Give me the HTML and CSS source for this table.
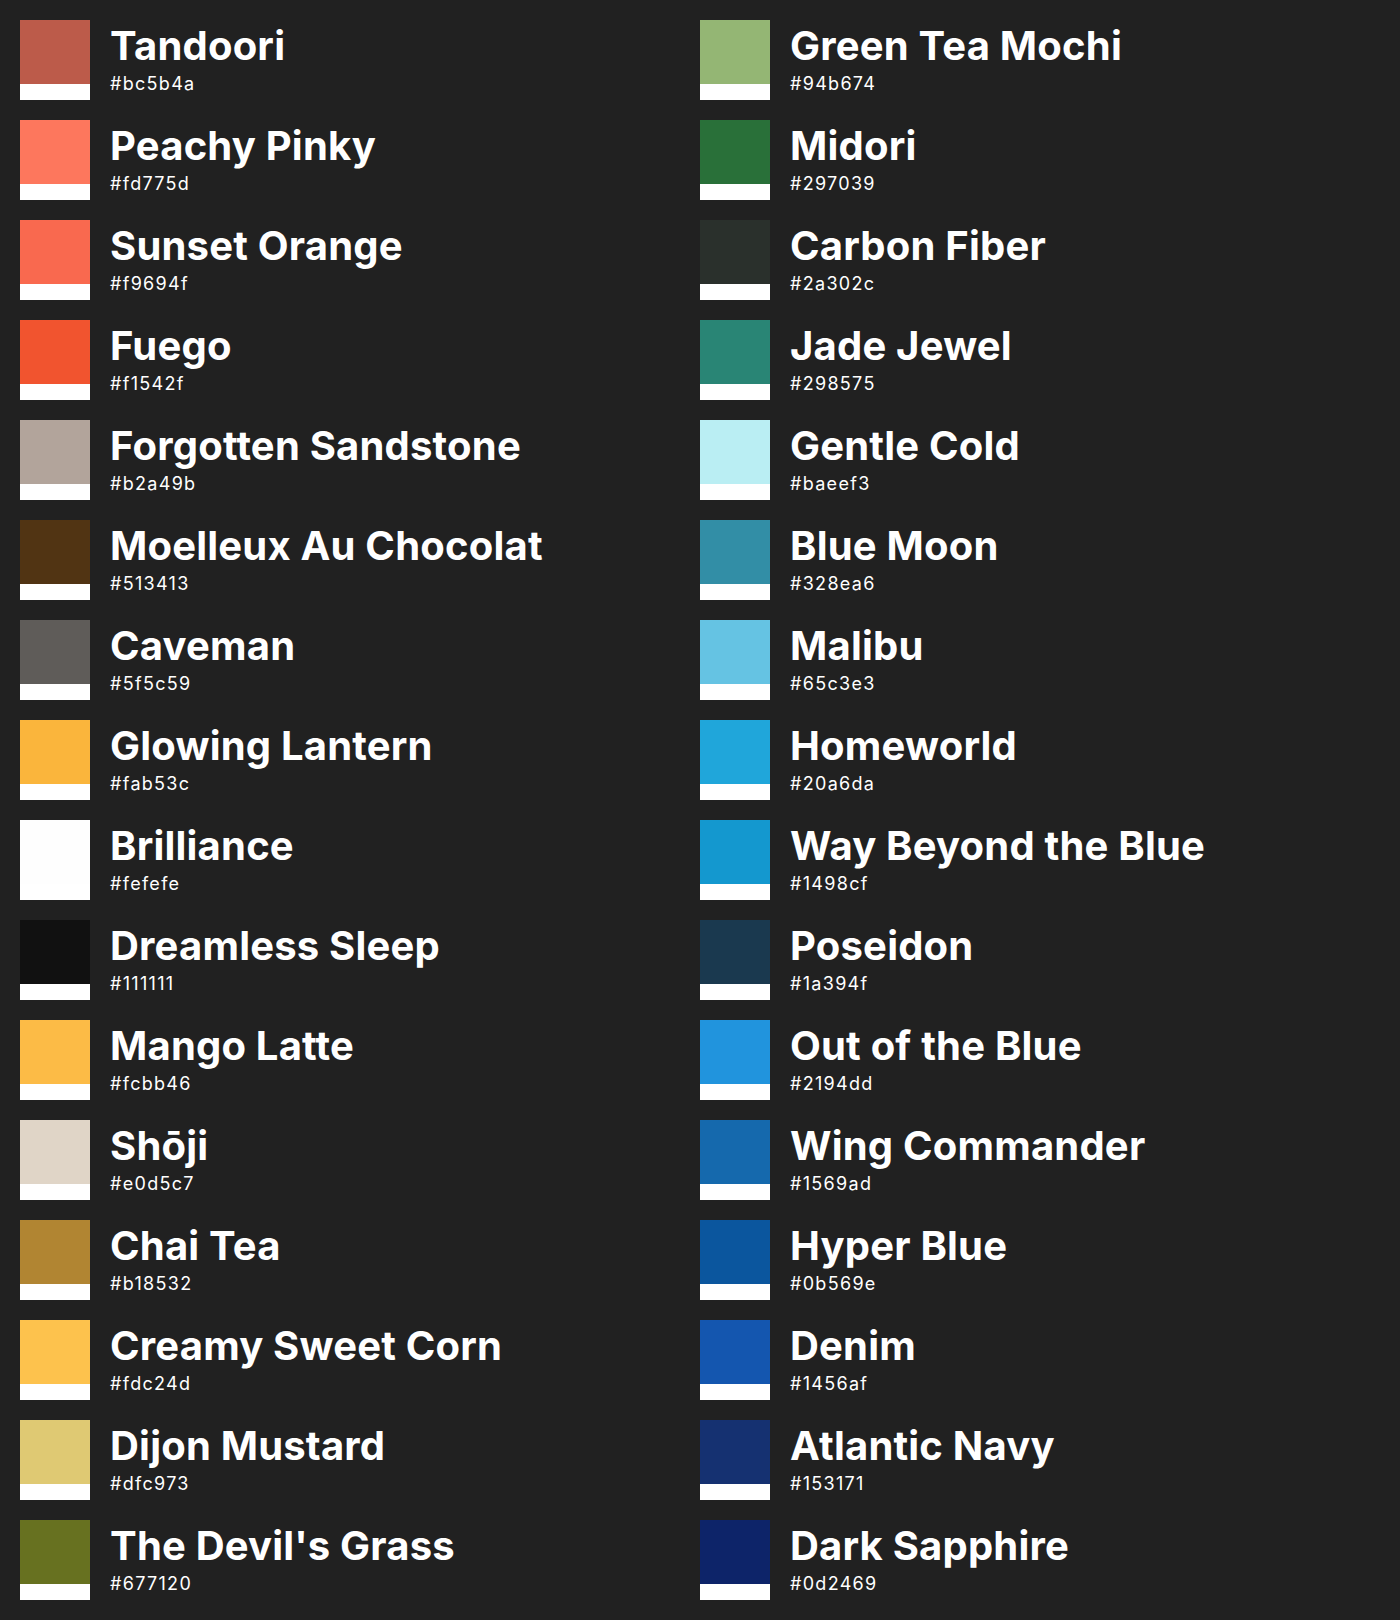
FILE: index.html
```html
<!DOCTYPE html>
<html>
<head>
<meta charset="utf-8">
<link rel="stylesheet" href="styles.css">
</head>
<body>
<main class="palette">
  <div class="color"><div class="swatch" style="background:#bc5b4a"></div><div class="info"><div class="name">Tandoori</div><div class="hex">#bc5b4a</div></div></div>
  <div class="color"><div class="swatch" style="background:#fd775d"></div><div class="info"><div class="name">Peachy Pinky</div><div class="hex">#fd775d</div></div></div>
  <div class="color"><div class="swatch" style="background:#f9694f"></div><div class="info"><div class="name">Sunset Orange</div><div class="hex">#f9694f</div></div></div>
  <div class="color"><div class="swatch" style="background:#f1542f"></div><div class="info"><div class="name">Fuego</div><div class="hex">#f1542f</div></div></div>
  <div class="color"><div class="swatch" style="background:#b2a49b"></div><div class="info"><div class="name">Forgotten Sandstone</div><div class="hex">#b2a49b</div></div></div>
  <div class="color"><div class="swatch" style="background:#513413"></div><div class="info"><div class="name">Moelleux Au Chocolat</div><div class="hex">#513413</div></div></div>
  <div class="color"><div class="swatch" style="background:#5f5c59"></div><div class="info"><div class="name">Caveman</div><div class="hex">#5f5c59</div></div></div>
  <div class="color"><div class="swatch" style="background:#fab53c"></div><div class="info"><div class="name">Glowing Lantern</div><div class="hex">#fab53c</div></div></div>
  <div class="color"><div class="swatch" style="background:#fefefe"></div><div class="info"><div class="name">Brilliance</div><div class="hex">#fefefe</div></div></div>
  <div class="color"><div class="swatch" style="background:#111111"></div><div class="info"><div class="name">Dreamless Sleep</div><div class="hex">#111111</div></div></div>
  <div class="color"><div class="swatch" style="background:#fcbb46"></div><div class="info"><div class="name">Mango Latte</div><div class="hex">#fcbb46</div></div></div>
  <div class="color"><div class="swatch" style="background:#e0d5c7"></div><div class="info"><div class="name">Shōji</div><div class="hex">#e0d5c7</div></div></div>
  <div class="color"><div class="swatch" style="background:#b18532"></div><div class="info"><div class="name">Chai Tea</div><div class="hex">#b18532</div></div></div>
  <div class="color"><div class="swatch" style="background:#fdc24d"></div><div class="info"><div class="name">Creamy Sweet Corn</div><div class="hex">#fdc24d</div></div></div>
  <div class="color"><div class="swatch" style="background:#dfc973"></div><div class="info"><div class="name">Dijon Mustard</div><div class="hex">#dfc973</div></div></div>
  <div class="color"><div class="swatch" style="background:#677120"></div><div class="info"><div class="name">The Devil's Grass</div><div class="hex">#677120</div></div></div>

  <div class="color"><div class="swatch" style="background:#94b674"></div><div class="info"><div class="name">Green Tea Mochi</div><div class="hex">#94b674</div></div></div>
  <div class="color"><div class="swatch" style="background:#297039"></div><div class="info"><div class="name">Midori</div><div class="hex">#297039</div></div></div>
  <div class="color"><div class="swatch" style="background:#2a302c"></div><div class="info"><div class="name">Carbon Fiber</div><div class="hex">#2a302c</div></div></div>
  <div class="color"><div class="swatch" style="background:#298575"></div><div class="info"><div class="name">Jade Jewel</div><div class="hex">#298575</div></div></div>
  <div class="color"><div class="swatch" style="background:#baeef3"></div><div class="info"><div class="name">Gentle Cold</div><div class="hex">#baeef3</div></div></div>
  <div class="color"><div class="swatch" style="background:#328ea6"></div><div class="info"><div class="name">Blue Moon</div><div class="hex">#328ea6</div></div></div>
  <div class="color"><div class="swatch" style="background:#65c3e3"></div><div class="info"><div class="name">Malibu</div><div class="hex">#65c3e3</div></div></div>
  <div class="color"><div class="swatch" style="background:#20a6da"></div><div class="info"><div class="name">Homeworld</div><div class="hex">#20a6da</div></div></div>
  <div class="color"><div class="swatch" style="background:#1498cf"></div><div class="info"><div class="name">Way Beyond the Blue</div><div class="hex">#1498cf</div></div></div>
  <div class="color"><div class="swatch" style="background:#1a394f"></div><div class="info"><div class="name">Poseidon</div><div class="hex">#1a394f</div></div></div>
  <div class="color"><div class="swatch" style="background:#2194dd"></div><div class="info"><div class="name">Out of the Blue</div><div class="hex">#2194dd</div></div></div>
  <div class="color"><div class="swatch" style="background:#1569ad"></div><div class="info"><div class="name">Wing Commander</div><div class="hex">#1569ad</div></div></div>
  <div class="color"><div class="swatch" style="background:#0b569e"></div><div class="info"><div class="name">Hyper Blue</div><div class="hex">#0b569e</div></div></div>
  <div class="color"><div class="swatch" style="background:#1456af"></div><div class="info"><div class="name">Denim</div><div class="hex">#1456af</div></div></div>
  <div class="color"><div class="swatch" style="background:#153171"></div><div class="info"><div class="name">Atlantic Navy</div><div class="hex">#153171</div></div></div>
  <div class="color"><div class="swatch" style="background:#0d2469"></div><div class="info"><div class="name">Dark Sapphire</div><div class="hex">#0d2469</div></div></div>
</main>
</body>
</html>
```

FILE: styles.css
```css
html, body {
  margin: 0;
  padding: 0;
  background: #212121;
}
body {
  font-family: Inter, "Noto Sans", sans-serif;
  color: #ffffff;
}
.palette {
  display: grid;
  grid-template-columns: 680px 680px;
  grid-template-rows: repeat(16, 80px);
  grid-auto-flow: column;
  row-gap: 20px;
  padding: 20px;
}
.color {
  display: flex;
  align-items: flex-start;
  gap: 20px;
}
.swatch {
  flex: none;
  width: 70px;
  height: 64px;
  border-bottom: 16px solid #ffffff;
}
.info {
  display: flex;
  flex-direction: column;
  padding-top: 2px;
}
.name {
  font-size: 40px;
  font-weight: 700;
  line-height: 48px;
  letter-spacing: 0.2px;
  white-space: nowrap;
}
.hex {
  font-size: 18px;
  font-weight: 400;
  line-height: 24px;
  letter-spacing: 1.3px;
  margin-top: 2px;
}
```
